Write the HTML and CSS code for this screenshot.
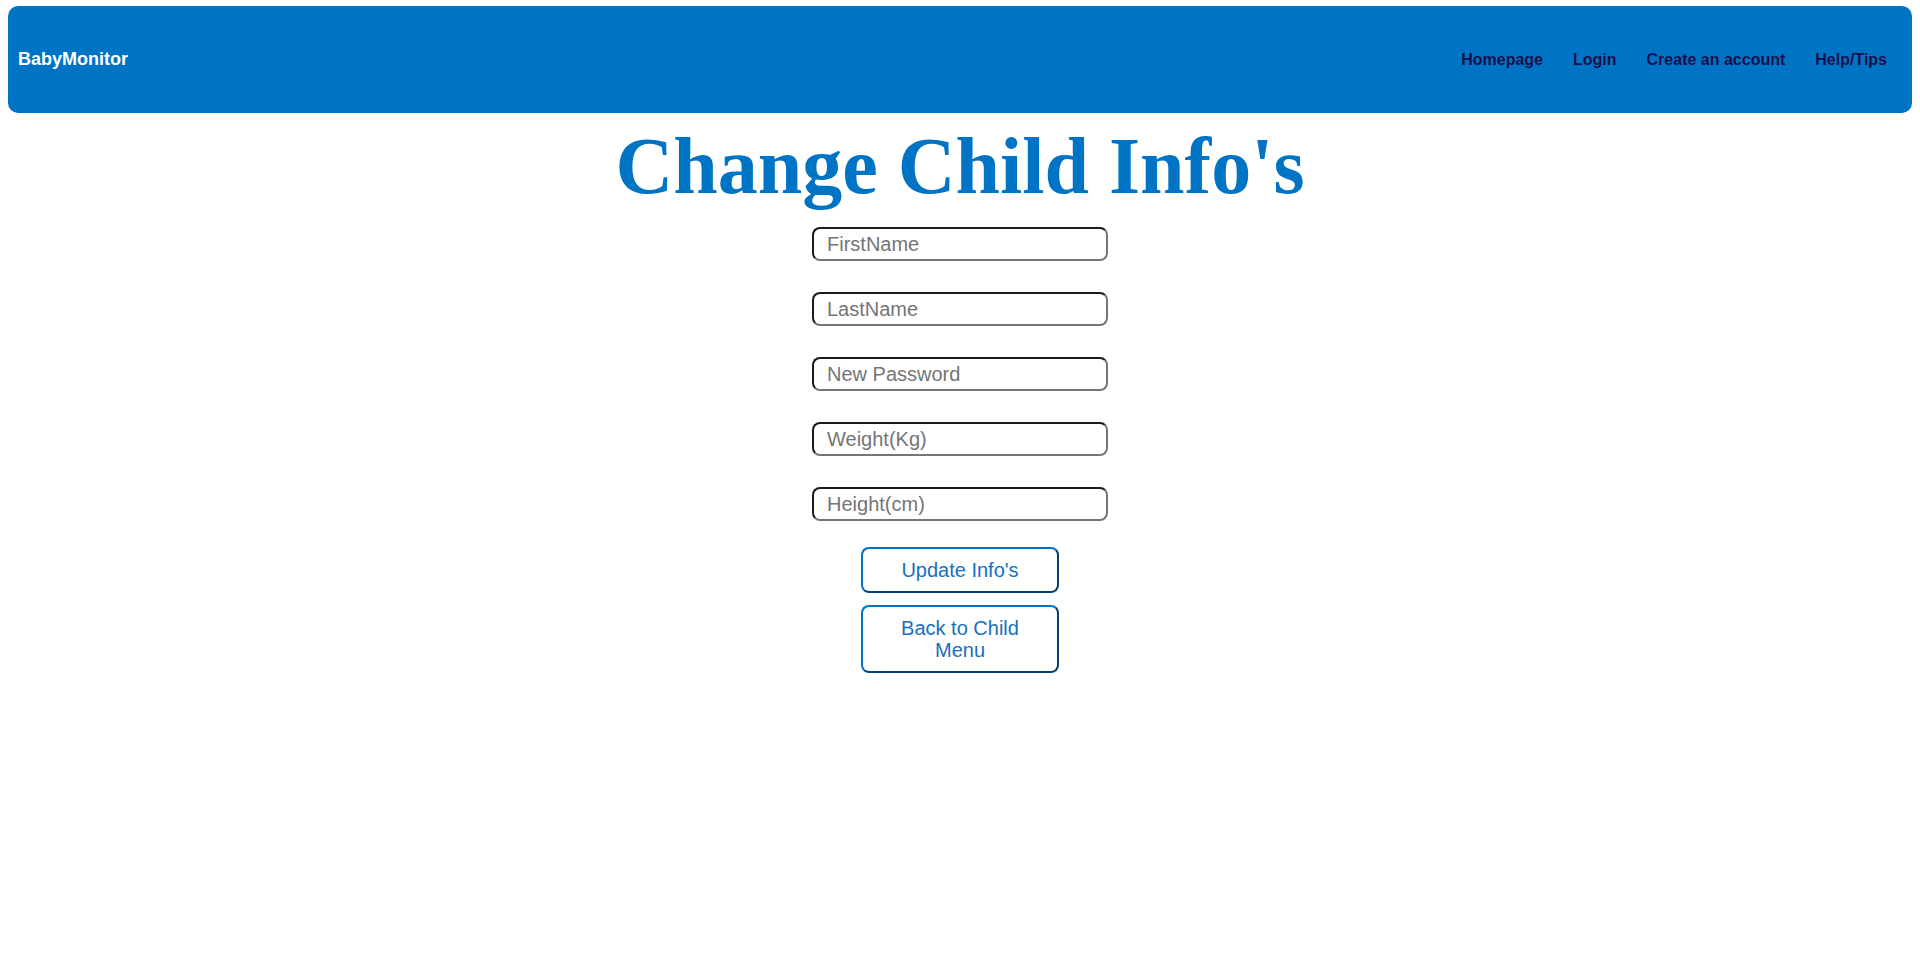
FILE: index.html
```html
<!DOCTYPE html>
<html lang="en">
<head>
<meta charset="utf-8">
<title>Change Child Info's</title>
<link rel="stylesheet" href="styles.css">
</head>
<body>
<header class="topbar">
  <a class="brand" href="#">BabyMonitor</a>
  <nav class="nav">
    <a href="#">Homepage</a>
    <a href="#">Login</a>
    <a href="#">Create an account</a>
    <a href="#">Help/Tips</a>
  </nav>
</header>
<h1 class="title">Change Child Info's</h1>
<form class="form">
  <div class="fields">
    <input class="field" type="text" placeholder="FirstName">
    <input class="field" type="text" placeholder="LastName">
    <input class="field" type="password" placeholder="New Password">
    <input class="field" type="text" placeholder="Weight(Kg)">
    <input class="field" type="text" placeholder="Height(cm)">
  </div>
  <div class="actions">
    <button class="btn" type="button">Update Info's</button>
    <button class="btn" type="button">Back to Child Menu</button>
  </div>
</form>
</body>
</html>
```
FILE: styles.css
```css
body {
  margin: 6px 8px 8px;
  font-family: "Liberation Sans", Arial, sans-serif;
  background: #ffffff;
}
.topbar {
  height: 107px;
  background: #0074c4;
  border-radius: 10px;
  display: flex;
  align-items: center;
  justify-content: space-between;
  padding: 0 10px;
}
.brand {
  color: #ffffff;
  font-weight: bold;
  font-size: 18px;
  text-decoration: none;
}
.nav {
  display: flex;
}
.nav a {
  color: #1c0f4d;
  font-weight: bold;
  font-size: 16px;
  text-decoration: none;
  padding: 0 15px;
}
.title {
  margin: 8px 0 15px;
  text-align: center;
  font-family: "Liberation Serif", "Times New Roman", serif;
  font-weight: bold;
  font-size: 80px;
  color: #0074c4;
}
.form {
  display: flex;
  flex-direction: column;
  align-items: center;
}
.fields {
  display: flex;
  flex-direction: column;
  gap: 31px;
}
.field {
  box-sizing: border-box;
  width: 296px;
  height: 34px;
  margin: 0;
  padding: 0 13px;
  font-family: "Liberation Sans", Arial, sans-serif;
  font-size: 20px;
  border: 2px solid;
  border-color: #1a1a1a #767676 #767676 #1a1a1a;
  border-radius: 8px;
  background: #ffffff;
}
.field::placeholder {
  color: #757575;
}
.actions {
  margin-top: 26px;
  display: flex;
  flex-direction: column;
  gap: 12px;
}
.btn {
  box-sizing: border-box;
  width: 198px;
  margin: 0;
  padding: 10px 14px;
  font-family: "Liberation Sans", Arial, sans-serif;
  font-size: 20px;
  line-height: 22px;
  color: #1670c0;
  background: #ffffff;
  border: 2px solid;
  border-color: #0074c4 #003f7a #003f7a #0074c4;
  border-radius: 8px;
}
```
